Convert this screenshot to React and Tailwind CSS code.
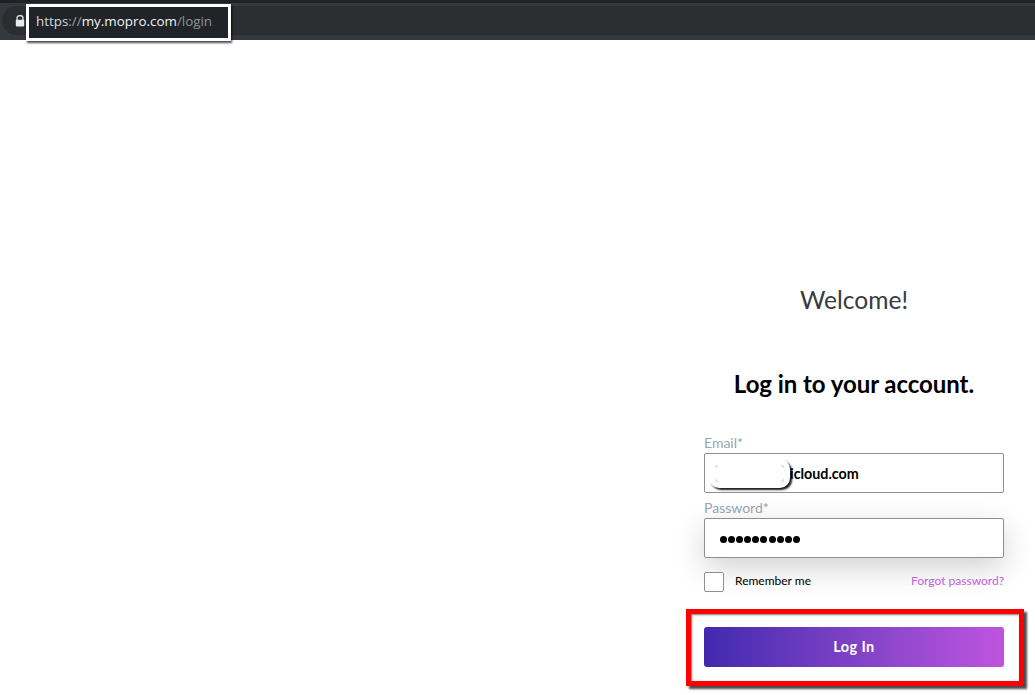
import React from "react";

const lato = { fontFamily: "Lato, 'Liberation Sans', sans-serif" };

function Lock() {
  return (
    <svg width="10" height="12" viewBox="0 0 10 12" className="shrink-0">
      <path d="M2 5V3.4C2 1.6 3.3.6 5 .6s3 1 3 2.8V5" fill="none" stroke="#e8eaed" strokeWidth="1.3" />
      <rect x="0.8" y="4.8" width="8.4" height="6.6" rx="1" fill="#e8eaed" />
    </svg>
  );
}

function Mark({ className }) {
  return <span className={`h-[3px] w-[3px] border-[#d4d4d4] ${className}`} />;
}

export default function App() {
  return (
    <div className="relative h-[695px] w-[1035px] overflow-hidden bg-white" style={lato}>
      <header className="flex h-10 flex-col bg-[#35383c]">
        <div className="h-[3px] bg-[#202124]" />
        <div className="mt-[3px] ml-[2px] flex h-[29px] items-center rounded-l-full bg-[#2a2e31] pl-[13px]">
          <Lock />
        </div>
      </header>

      <div className="absolute left-[26px] top-[4px] flex h-[37px] w-[205px] items-center border-[3px] border-white bg-[#202327] pb-[3px] pl-[7px] text-[13.4px] shadow-[1px_2px_2px_rgba(0,0,0,0.7)]" style={{ fontFamily: "'Open Sans', sans-serif" }}>
        <span className="text-[#d5d8dc]">https</span>
        <span className="text-[#9aa0a6]">://</span>
        <span className="text-[#f1f3f4]">my.mopro.com</span>
        <span className="text-[#8f9499]">/login</span>
      </div>

      <main className="flex justify-end pr-[31px]">
        <div className="flex w-[300px] flex-col">
          <h2 className="mt-[244px] text-center text-[24.6px] leading-[32px] font-normal text-[#383b40]">Welcome!</h2>
          <h1 className="mt-[52px] text-center text-[24px] leading-[32px] font-bold tracking-[-0.05px] text-black">Log in to your account.</h1>

          <label className="mt-[33px] text-[14px] leading-[20px] text-[#9aa5b1]">Email*</label>
          <div className="relative flex h-10 items-center rounded-[2px] border border-[#8f8f8f] bg-white pt-[2px] pl-[85px] text-[14.3px] font-bold text-black">
            icloud.com
            <div className="absolute left-[4px] top-[5px] flex h-[29px] w-[81px] items-center justify-between rounded-[10px] bg-white px-[6px] shadow-[2px_2px_2px_rgba(0,0,0,0.9)]">
              <span className="flex h-[17px] flex-col justify-between">
                <Mark className="rounded-tl-[3px] border-t border-l" />
                <Mark className="rounded-bl-[3px] border-b border-l" />
              </span>
              <span className="flex h-[17px] flex-col justify-between">
                <Mark className="rounded-tr-[3px] border-t border-r" />
                <Mark className="rounded-br-[3px] border-b border-r" />
              </span>
            </div>
          </div>

          <label className="mt-[5px] text-[14px] leading-[20px] text-[#9aa5b1]">Password*</label>
          <div className="flex h-10 items-center rounded-[2px] border border-[#8f8f8f] bg-white pt-[2px] pl-[15px] shadow-[0_10px_30px_rgba(0,0,0,0.18)]">
            <span className="flex gap-[1.1px]">
              {Array.from({ length: 10 }, (_, i) => (
                <span key={i} className="h-[7px] w-[7px] rounded-full bg-black" />
              ))}
            </span>
          </div>

          <div className="mt-[14px] flex items-center">
            <span className="h-5 w-5 rounded-[2px] border border-[#8f8f8f] bg-white" />
            <span className="ml-[11px] pb-[2px] text-[12px] leading-4 text-black">Remember me</span>
            <a className="ml-auto pb-[2px] text-[12px] leading-4 text-[#c05fdc]">Forgot password?</a>
          </div>

          <button className="mt-[35px] h-10 rounded-[3px] bg-gradient-to-r from-[#4228ae] to-[#bf54de] text-[14.5px] font-bold tracking-[0.4px] text-white">
            Log In
          </button>
        </div>
      </main>

      <div className="pointer-events-none absolute left-[686px] top-[609px] h-[77px] w-[338px] border-[5px] border-[#ff0000] shadow-[3px_3px_2px_rgba(0,0,0,0.7),inset_1px_1px_2px_rgba(0,0,0,0.5)]" />
    </div>
  );
}
